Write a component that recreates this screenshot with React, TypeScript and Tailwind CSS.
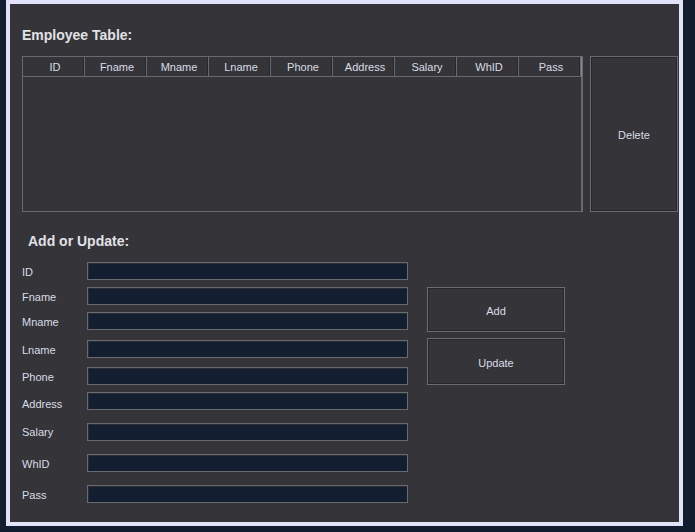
const columns = ["ID", "Fname", "Mname", "Lname", "Phone", "Address", "Salary", "WhID", "Pass"];

// gap above each input row, to match the uneven spacing of the form
const fields = [
  { label: "ID", mt: "mt-0", pt: "pt-[2px]" },
  { label: "Fname", mt: "mt-[7px]", pt: "pt-[2px]" },
  { label: "Mname", mt: "mt-[7px]", pt: "pt-[2px]" },
  { label: "Lname", mt: "mt-[10px]", pt: "pt-[2px]" },
  { label: "Phone", mt: "mt-[9px]", pt: "pt-[2px]" },
  { label: "Address", mt: "mt-[7px]", pt: "pt-[6px]" },
  { label: "Salary", mt: "mt-[13px]", pt: "pt-0" },
  { label: "WhID", mt: "mt-[13px]", pt: "pt-[2px]" },
  { label: "Pass", mt: "mt-[13px]", pt: "pt-[2px]" },
];

const FlatButton = ({ label, className }: { label: string; className: string }) => (
  <button
    className={`flex items-center justify-center border border-[#6b6b70] bg-[#353439] text-[11px] text-[#d8dde6] shadow-[inset_1px_1px_0_#26272c,inset_-1px_-1px_0_#26272c] ${className}`}
  >
    {label}
  </button>
);

const App = () => {
  return (
    <div
      className="w-[695px] h-[532px] bg-[#131d30]"
      style={{ fontFamily: '"Liberation Sans", Arial, sans-serif' }}
    >
      <div className="ml-[6px] w-[677px] h-[526px] bg-[#e2e2fb] p-[4px]">
        <main className="w-full h-full bg-[#353439] pl-[12px] pt-[23px] text-[#d8dde6]">
          <h1 className="text-[14px] leading-[16px] font-bold text-[#e2e2e6]">Employee Table:</h1>

          <section className="mt-[13px] flex gap-[7px]">
            <div className="w-[561px] h-[156px] border border-[#6a6a6e] flex flex-col">
              <div className="flex h-[20px] border-b border-[#6a6a6e]">
                {columns.map((c) => (
                  <div
                    key={c}
                    className="w-[62px] h-full flex items-center justify-center border-r border-[#6a6a6e] shadow-[inset_-1px_0_0_#26272c] text-[11px] pl-[3px] pt-[1px]"
                  >
                    {c}
                  </div>
                ))}
                <div className="flex-1 border-l border-[#8a8a8e]" />
              </div>
              <div className="flex-1 flex">
                <div className="flex-1" />
                <div className="w-[1px] bg-[#6a6a6e]" />
              </div>
            </div>
            <FlatButton label="Delete" className="w-[88px] h-[156px] pt-[2px]" />
          </section>

          <h2 className="mt-[21px] pl-[6px] text-[14px] leading-[16px] font-bold text-[#e2e2e6]">
            Add or Update:
          </h2>

          <section className="mt-[13px] flex gap-[19px]">
            <div className="w-[386px] flex flex-col">
              {fields.map((f) => (
                <div key={f.label} className={`flex items-center h-[18px] ${f.mt}`}>
                  <label className={`w-[65px] text-[11px] ${f.pt}`}>{f.label}</label>
                  <input
                    className="w-[321px] h-[18px] bg-[#131e31] border border-[#6a6b70] shadow-[inset_1px_1px_0_#2a2d35] outline-none"
                  />
                </div>
              ))}
            </div>
            <div className="mt-[25px] flex flex-col gap-[6px]">
              <FlatButton label="Add" className="w-[138px] h-[45px] pt-[3px]" />
              <FlatButton label="Update" className="w-[138px] h-[47px] pt-[3px]" />
            </div>
          </section>
        </main>
      </div>
    </div>
  );
};

export default App;
